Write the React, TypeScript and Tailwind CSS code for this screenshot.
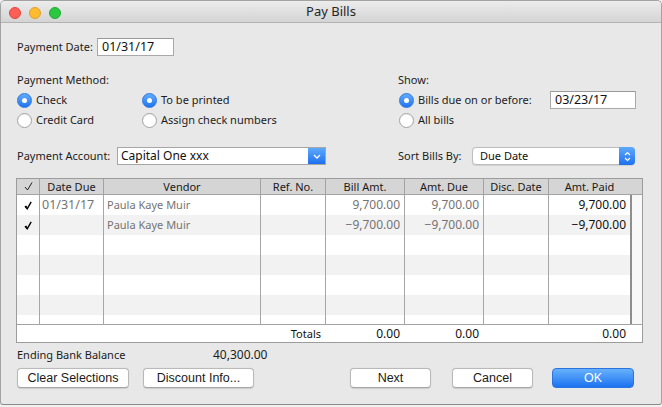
import React from "react";

type Row = {
  checked: boolean;
  due: string;
  vendor: string;
  ref: string;
  bill: string;
  amtDue: string;
  disc: string;
  paid: string;
};

const rows: Row[] = [
  { checked: true, due: "01/31/17", vendor: "Paula Kaye Muir", ref: "", bill: "9,700.00", amtDue: "9,700.00", disc: "", paid: "9,700.00" },
  { checked: true, due: "", vendor: "Paula Kaye Muir", ref: "", bill: "\u22129,700.00", amtDue: "\u22129,700.00", disc: "", paid: "\u22129,700.00" },
  { checked: false, due: "", vendor: "", ref: "", bill: "", amtDue: "", disc: "", paid: "" },
  { checked: false, due: "", vendor: "", ref: "", bill: "", amtDue: "", disc: "", paid: "" },
  { checked: false, due: "", vendor: "", ref: "", bill: "", amtDue: "", disc: "", paid: "" },
  { checked: false, due: "", vendor: "", ref: "", bill: "", amtDue: "", disc: "", paid: "" },
  { checked: false, due: "", vendor: "", ref: "", bill: "", amtDue: "", disc: "", paid: "" },
];

function Radio({ on, label }: { on?: boolean; label: string }) {
  return (
    <div className="flex h-[20px] items-center">
      {on ? (
        <span className="flex h-[15px] w-[15px] items-center justify-center rounded-full border border-[#2c78e4] bg-linear-to-b from-[#62abfb] to-[#1f74ef]">
          <span className="h-[5px] w-[5px] rounded-full bg-white" />
        </span>
      ) : (
        <span className="h-[15px] w-[15px] rounded-full border border-[#a2a2a2] bg-white shadow-[inset_0_1px_1px_rgba(0,0,0,0.06)]" />
      )}
      <span className="ml-[4px] leading-[16px]">{label}</span>
    </div>
  );
}

function TextBox({ value, width }: { value: string; width: string }) {
  return (
    <div
      className={`${width} flex h-[18px] items-center border border-[#a9a9a9] border-t-[#9a9a9a] bg-white pl-[4px] text-[12.5px] text-[#111]`}
    >
      {value}
    </div>
  );
}

function HeaderCheck() {
  return (
    <svg width="9" height="9" viewBox="0 0 9 9">
      <path d="M1 5 L3.5 8 L8 0.5" fill="none" stroke="#222" strokeWidth="1" />
    </svg>
  );
}

function RowCheck() {
  return (
    <svg width="8" height="9" viewBox="0 0 8 9">
      <path d="M1 5.2 L3.2 7.8 L7.2 0.8" fill="none" stroke="#000" strokeWidth="1.4" />
      <path d="M0.8 5.4 L2.2 4.6 L3.6 6.6 Z" fill="#000" />
    </svg>
  );
}

const rowCols = "grid grid-cols-[23px_64px_157px_65px_79px_79px_65px_81px]";

function Button({ label, width, primary }: { label: string; width: string; primary?: boolean }) {
  if (primary) {
    return (
      <div
        className={`${width} flex h-[20px] items-center justify-center rounded-[4px] border border-[#2b73e0] bg-linear-to-b from-[#66b0fc] to-[#1b72f0] font-['Liberation_Sans',sans-serif] text-[12.5px] text-white`}
      >
        {label}
      </div>
    );
  }
  return (
    <div
      className={`${width} flex h-[20px] items-center justify-center rounded-[4px] border border-[#b9b9b9] border-b-[#a5a5a5] bg-white font-['Liberation_Sans',sans-serif] text-[12.5px] text-[#1a1a1a] shadow-[0_0.5px_1px_rgba(0,0,0,0.12)]`}
    >
      {label}
    </div>
  );
}

export default function App() {
  return (
    <div className="h-[407px] w-[662px] overflow-hidden bg-[#f1f1f1] font-['Noto_Sans',sans-serif] text-[11px] text-[#1c1c1c]">
      <div className="flex h-[405px] w-[662px] flex-col overflow-hidden rounded-t-[5px] rounded-b-[3px] border border-[#a3a3a3] border-b-[#8a8a8a] bg-[#e8e8e8]">
        {/* title bar */}
        <div className="relative flex h-[22px] shrink-0 items-start border-b border-[#b3b3b3] bg-linear-to-b from-[#ececec] to-[#d4d4d4] pl-[8px]">
          <div className="mt-[6px] flex gap-[8px]">
            <span className="h-[12px] w-[12px] rounded-full border border-[#e0443e] bg-[#fd5f57]" />
            <span className="h-[12px] w-[12px] rounded-full border border-[#dea030] bg-[#fdbb2e]" />
            <span className="h-[12px] w-[12px] rounded-full border border-[#1faa32] bg-[#2ac840]" />
          </div>
          <div className="absolute inset-x-0 top-0 flex h-[21px] items-center justify-center text-[13px] text-[#262626]">
            Pay Bills
          </div>
        </div>

        <div className="flex flex-col pl-[16px]">
          {/* payment date */}
          <div className="mt-[15px] flex h-[18px] items-center">
            <span className="w-[80px]">Payment Date:</span>
            <TextBox value="01/31/17" width="w-[77px]" />
          </div>

          {/* payment method / show */}
          <div className="mt-[16px] flex">
            <div className="w-[381px]">
              <div className="h-[16px] leading-[16px]">Payment Method:</div>
              <div className="mt-[2px] grid grid-cols-[125px_1fr]">
                <Radio on label="Check" />
                <Radio on label="To be printed" />
                <Radio label="Credit Card" />
                <Radio label="Assign check numbers" />
              </div>
            </div>
            <div className="w-[238px]">
              <div className="h-[16px] leading-[16px]">Show:</div>
              <div className="mt-[2px] flex h-[20px] items-center">
                <div className="ml-[1px]">
                  <Radio on label="Bills due on or before:" />
                </div>
                <div className="ml-auto">
                  <TextBox value="03/23/17" width="w-[86px]" />
                </div>
              </div>
              <div className="ml-[1px]">
                <Radio label="All bills" />
              </div>
            </div>
          </div>

          {/* account / sort */}
          <div className="mt-[17px] flex h-[18px] items-center">
            <div className="flex w-[381px] items-center">
              <span className="w-[100px]">Payment Account:</span>
              <div className="flex h-[18px] w-[209px] items-stretch border border-[#a6a6a6] bg-white">
                <span className="flex flex-1 items-center pl-[3px] text-[12px] text-[#111]">Capital One xxx</span>
                <span className="flex w-[17px] items-center justify-center bg-linear-to-b from-[#5ea9fb] to-[#1d70ee]">
                  <svg width="8" height="5" viewBox="0 0 8 5">
                    <path d="M1 1 L4 4 L7 1" fill="none" stroke="#fff" strokeWidth="1.3" />
                  </svg>
                </span>
              </div>
            </div>
            <div className="flex items-center">
              <span className="w-[74px]">Sort Bills By:</span>
              <div className="flex h-[18px] w-[163px] items-stretch rounded-[4px] border border-[#bdbdbd] bg-white shadow-[0_0.5px_1px_rgba(0,0,0,0.1)]">
                <span className="flex flex-1 items-center pl-[7px] text-[11px] text-[#111]">Due Date</span>
                <span className="-my-px -mr-px flex w-[16px] items-center justify-center rounded-r-[4px] bg-linear-to-b from-[#5ea9fb] to-[#1d70ee]">
                  <svg width="7" height="11" viewBox="0 0 7 11">
                    <path d="M1 4 L3.5 1.5 L6 4 M1 7 L3.5 9.5 L6 7" fill="none" stroke="#fff" strokeWidth="1.2" />
                  </svg>
                </span>
              </div>
            </div>
          </div>

          {/* table */}
          <div className="-ml-px mt-[13px] w-[627px] border border-[#9c9c9c] bg-white">
            <div className="grid h-[16px] grid-cols-[23px_64px_157px_65px_79px_79px_65px_93px] border-b border-[#a3a3a3] bg-[#d5d5d5] leading-[15px] text-[#1a1a1a]">
              <div className="flex items-center justify-center border-r border-[#a3a3a3]">
                <HeaderCheck />
              </div>
              <div className="border-r border-[#a3a3a3] text-center">Date Due</div>
              <div className="border-r border-[#a3a3a3] text-center">Vendor</div>
              <div className="border-r border-[#a3a3a3] text-center">Ref. No.</div>
              <div className="border-r border-[#a3a3a3] text-center">Bill Amt.</div>
              <div className="border-r border-[#a3a3a3] text-center">Amt. Due</div>
              <div className="border-r border-[#a3a3a3] text-center">Disc. Date</div>
              <div className="pr-[12px] text-center">Amt. Paid</div>
            </div>

            <div className="flex h-[129px] overflow-hidden">
              <div className="w-[613px]">
                {rows.map((r, i) => (
                  <div key={i} className={`${rowCols} h-[20px] ${i % 2 === 1 ? "bg-[#f2f2f2]" : "bg-white"}`}>
                    <div className="flex items-center justify-center border-r border-[#a6a6a6]">
                      {r.checked ? <RowCheck /> : null}
                    </div>
                    <div className="flex items-center border-r border-[#a6a6a6] pl-[2px] text-[12.5px] text-[#747474]">{r.due}</div>
                    <div className="flex items-center border-r border-[#a6a6a6] pl-[3px] text-[#747474]">{r.vendor}</div>
                    <div className="border-r border-[#a6a6a6]">{r.ref}</div>
                    <div className="flex items-center justify-end border-r border-[#a6a6a6] pr-[4px] text-[12px] text-[#747474]">{r.bill}</div>
                    <div className="flex items-center justify-end border-r border-[#a6a6a6] pr-[4px] text-[12px] text-[#747474]">{r.amtDue}</div>
                    <div className="border-r border-[#a6a6a6]">{r.disc}</div>
                    <div className="flex items-center justify-end pr-[4px] text-[12px] text-[#111]">{r.paid}</div>
                  </div>
                ))}
              </div>
              <div className="w-[12px] border-l-2 border-[#8e8e8e] bg-[#f8f8f8]" />
            </div>

            <div className={`${rowCols} h-[18px] border-t border-[#a3a3a3] text-[#111]`}>
              <div />
              <div />
              <div />
              <div className="flex items-center justify-end pr-[5px]">Totals</div>
              <div className="flex items-center justify-end pr-[5px] text-[12px]">0.00</div>
              <div className="flex items-center justify-end pr-[5px] text-[12px]">0.00</div>
              <div />
              <div className="flex items-center justify-end pr-[4px] text-[12px]">0.00</div>
            </div>
          </div>

          {/* ending balance */}
          <div className="mt-[4px] flex h-[16px] items-center">
            <span className="w-[196px]">Ending Bank Balance</span>
            <span className="text-[12px]">40,300.00</span>
          </div>

          {/* buttons */}
          <div className="mt-[5px] flex">
            <Button label="Clear Selections" width="w-[112px]" />
            <div className="ml-[14px]">
              <Button label="Discount Info..." width="w-[111px]" />
            </div>
            <div className="ml-[96px]">
              <Button label="Next" width="w-[81px]" />
            </div>
            <div className="ml-[21px]">
              <Button label="Cancel" width="w-[81px]" />
            </div>
            <div className="ml-[19px]">
              <Button label="OK" width="w-[82px]" primary />
            </div>
          </div>
        </div>
      </div>
    </div>
  );
}
